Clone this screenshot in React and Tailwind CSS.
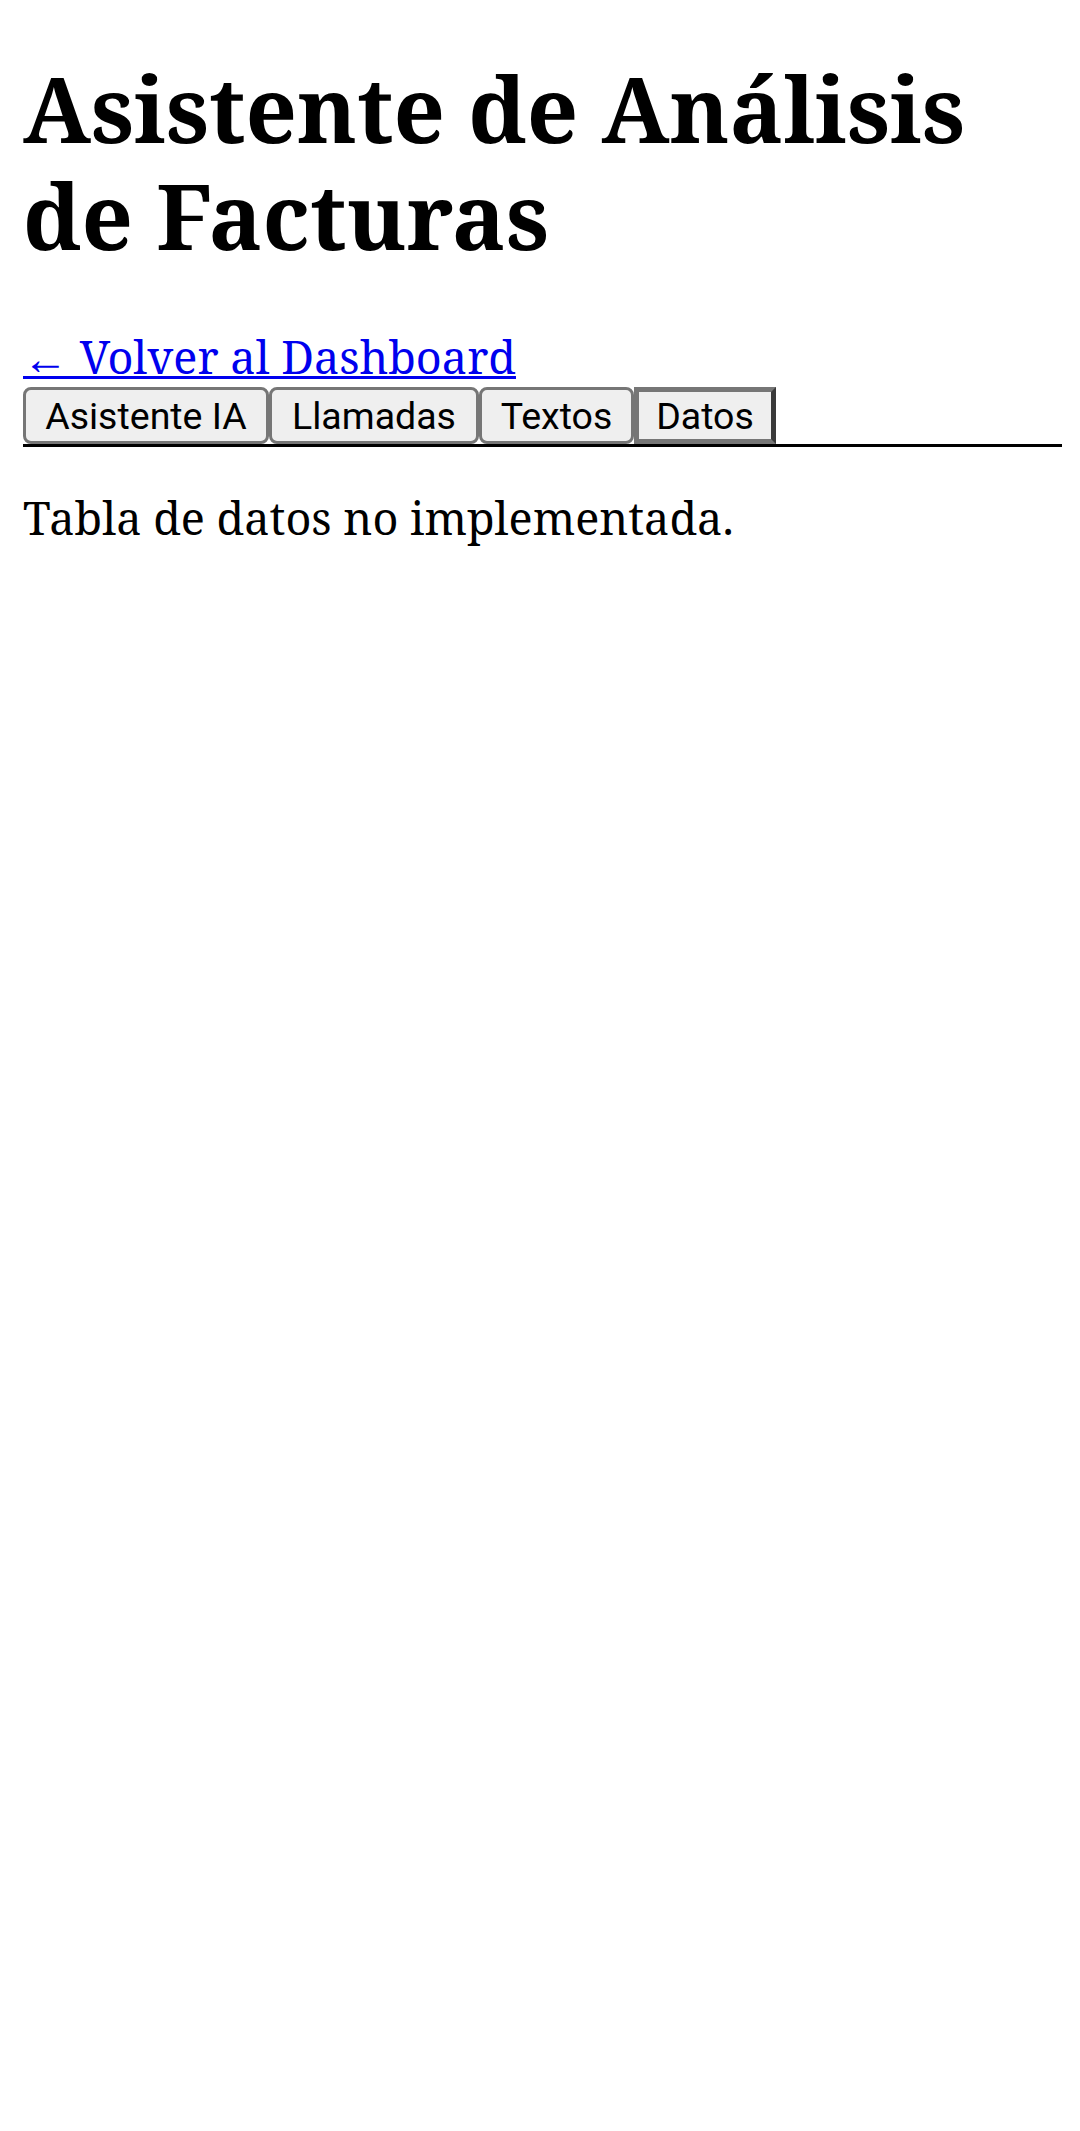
const tabs = [
  { label: 'Asistente IA', width: 'w-[246px]' },
  { label: 'Llamadas', width: 'w-[210px]' },
  { label: 'Textos', width: 'w-[155px]' },
];

export default function App() {
  return (
    <div className="min-h-screen bg-white pl-[23px] pr-[18px] text-black font-['Noto_Serif','DejaVu_Serif',serif]">
      <h1 className="pt-[55px] text-[90px] leading-[107px] font-bold">
        Asistente de Análisis de Facturas
      </h1>

      <div className="mt-[57px] h-[61px] overflow-hidden text-[45px] leading-[61px]">
        <a href="#" className="text-[#0000ee] underline decoration-[3px]">
          <span className="font-['Roboto',sans-serif] leading-none">←</span> Volver al Dashboard
        </a>
      </div>

      <div className="flex border-b-[3px] border-black font-['Roboto',sans-serif] text-[37.5px] leading-[44px]">
        {tabs.map((t) => (
          <button
            key={t.label}
            type="button"
            className={`${t.width} h-[57px] rounded-[8px] border-[3px] border-[#767676] bg-[#efefef] text-black`}
          >
            {t.label}
          </button>
        ))}
        <button
          type="button"
          className="w-[142px] h-[57px] border-[5px] border-t-[#767676] border-l-[#767676] border-b-[#767676] border-r-[#3a3a3a] bg-[#efefef] text-black"
        >
          Datos
        </button>
      </div>

      <p className="mt-[40px] text-[45px] leading-[61px]">Tabla de datos no implementada.</p>
    </div>
  );
}
